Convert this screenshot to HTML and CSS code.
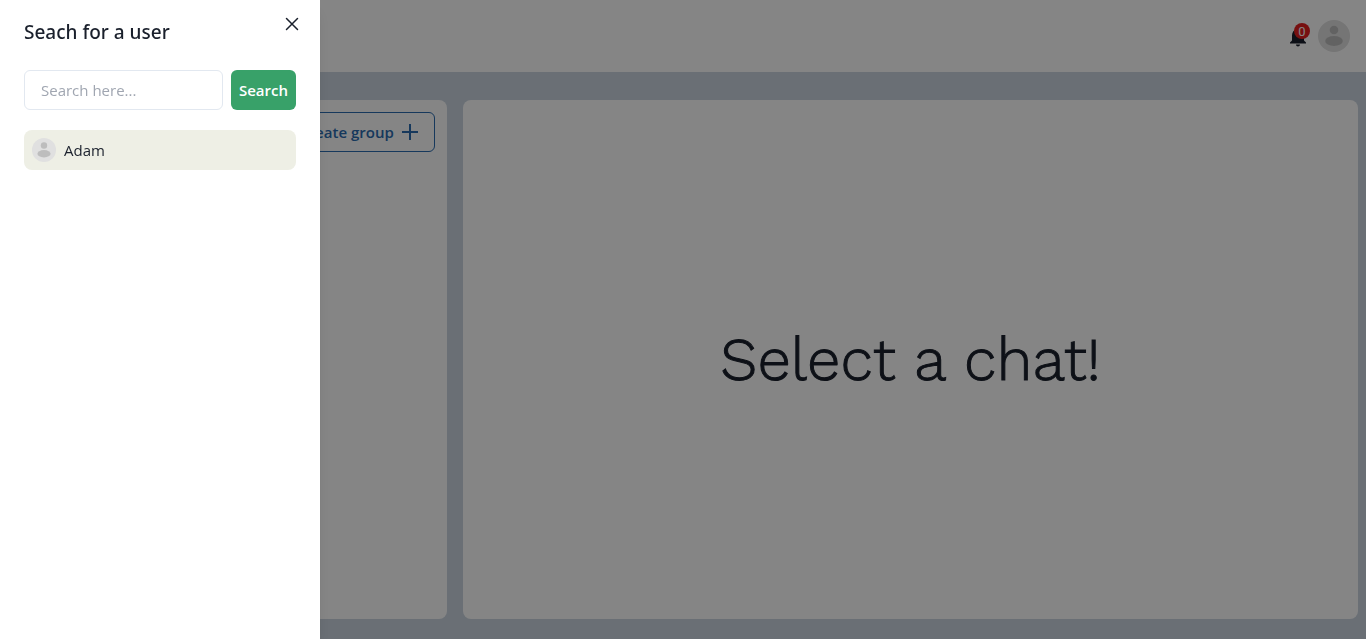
FILE: index.html
```html
<!DOCTYPE html>
<html lang="en">
<head>
<meta charset="utf-8">
<meta name="viewport" content="width=device-width, initial-scale=1">
<title>Chats</title>
<link rel="stylesheet" href="styles.css">
</head>
<body>
<div class="app">
  <header class="topbar">
    <button class="bell" type="button" aria-label="Notifications">
      <svg class="bell-icon" viewBox="0 0 24 24" aria-hidden="true"><path d="M12 22.500c1.100 0 2-.9 2-2h-4c0 1.100.89 2 2 2zm6-6v-5c0-3.070-1.640-5.640-4.500-6.320V4c0-.83-.67-1.500-1.500-1.500s-1.500.67-1.500 1.500v1.180C7.630 5.860 6 8.420 6 11.500v5l-2 2v1h16v-1l-2-2z"/></svg>
      <span class="badge">0</span>
    </button>
    <button class="profile" type="button" aria-label="Profile">
      <svg class="avatar avatar-md" viewBox="0 0 32 32" aria-hidden="true"><circle class="avatar-bg" cx="16" cy="16" r="16"/><circle class="avatar-fg" cx="16" cy="10" r="4.300"/><ellipse class="avatar-fg" cx="16" cy="21" rx="8.800" ry="4.900"/></svg>
    </button>
  </header>
  <main class="content">
    <section class="card chats">
      <button class="create" type="button">Create group
        <svg class="plus" viewBox="0 0 16 16" aria-hidden="true"><path d="M8 0v16M0 8h16"/></svg>
      </button>
    </section>
    <section class="card chat">
      <p class="empty">Select a chat!</p>
    </section>
  </main>
</div>
<div class="overlay"></div>
<aside class="drawer" role="dialog" aria-labelledby="drawer-title">
  <h2 class="drawer-title" id="drawer-title">Seach for a user</h2>
  <button class="close" type="button" aria-label="Close">
    <svg class="close-icon" viewBox="0 0 12 12" aria-hidden="true"><path d="M.5.5l11 11M11.500.5l-11 11"/></svg>
  </button>
  <form class="search">
    <input class="search-input" type="text" placeholder="Search here..." aria-label="Search here">
    <button class="search-button" type="button">Search</button>
  </form>
  <button class="user" type="button">
    <svg class="avatar avatar-sm" viewBox="0 0 32 32" aria-hidden="true"><circle class="avatar-bg" cx="16" cy="16" r="16"/><circle class="avatar-fg" cx="16" cy="10" r="4.300"/><ellipse class="avatar-fg" cx="16" cy="21" rx="8.800" ry="4.900"/></svg>
    Adam
  </button>
</aside>
</body>
</html>
```
FILE: styles.css
```css
* { box-sizing: border-box; }
body {
  margin: 0;
  color: #1a202c;
  font: 15px/24px "Open Sans", sans-serif;
}
button, input { margin: 0; font: inherit; color: inherit; }
button { padding: 0; border: 0; background: none; cursor: pointer; }
svg { display: block; flex: none; }

.app {
  display: flex;
  flex-direction: column;
  min-height: 100vh;
  background: #cbd5e0;
}
.topbar {
  display: flex;
  align-items: center;
  justify-content: flex-end;
  gap: 8px;
  height: 72px;
  padding: 0 16px;
  background: #fff;
}
.bell { position: relative; }
.bell-icon { width: 24px; height: 24px; fill: #1a202c; }
.badge {
  position: absolute;
  top: -1px;
  right: 0;
  width: 16px;
  height: 16px;
  border-radius: 50%;
  background: #e42020;
  color: #fff;
  font: 13px/17px "Roboto", sans-serif;
  text-align: center;
}
.avatar-md { width: 32px; height: 32px; }
.avatar-sm { width: 24px; height: 24px; }
.avatar-bg { fill: #e0e0e0; }
.avatar-fg { fill: #bdbdbd; }

.content {
  display: flex;
  flex: 1;
  gap: 16px;
  padding: 28px 8px 20px;
}
.card { border-radius: 8px; background: #fff; }
.chats {
  display: flex;
  flex: 0 0 32.5%;
  align-items: flex-start;
  justify-content: flex-end;
  padding: 12px;
}
.create {
  display: flex;
  align-items: center;
  gap: 8px;
  height: 40px;
  padding: 0 16px;
  border: 1px solid #2b6cb0;
  border-radius: 6px;
  color: #2b6cb0;
  font-weight: 600;
}
.plus { width: 16px; height: 16px; fill: none; stroke: currentColor; stroke-width: 2; }
.chat {
  display: flex;
  flex: 1;
  align-items: center;
  justify-content: center;
}
.empty {
  margin: 0;
  font: 300 60px/90px "Work Sans", "Inter", sans-serif;
  -webkit-text-stroke: 1px currentColor;
}

.overlay { position: fixed; inset: 0; background: rgba(0, 0, 0, 0.48); }
.drawer {
  position: fixed;
  inset: 0 auto 0 0;
  width: 320px;
  padding: 16px 24px;
  background: #fff;
  box-shadow: 0 10px 15px -3px rgba(0, 0, 0, 0.1), 0 4px 6px -2px rgba(0, 0, 0, 0.05);
}
.drawer-title { margin: 0 0 22px; font: 500 19px/32px "Noto Sans", sans-serif; }
.close {
  position: absolute;
  top: 8px;
  right: 12px;
  display: grid;
  place-items: center;
  width: 32px;
  height: 32px;
}
.close-icon { width: 12px; height: 12px; overflow: visible; fill: none; stroke: currentColor; stroke-width: 1.5; stroke-linecap: round; }
.search { display: flex; gap: 8px; margin-bottom: 20px; }
.search-input {
  flex: 1;
  min-width: 0;
  height: 40px;
  padding: 0 16px;
  border: 1px solid #e2e8f0;
  border-radius: 6px;
}
.search-input::placeholder { color: #a0a6b1; opacity: 1; }
.search-button {
  width: 65px;
  height: 40px;
  border-radius: 6px;
  background: #38a169;
  color: #fff;
  font-weight: 600;
}
.user {
  display: flex;
  align-items: center;
  gap: 8px;
  width: 100%;
  height: 40px;
  padding: 0 8px;
  border-radius: 8px;
  background: #eeefe5;
}
```
